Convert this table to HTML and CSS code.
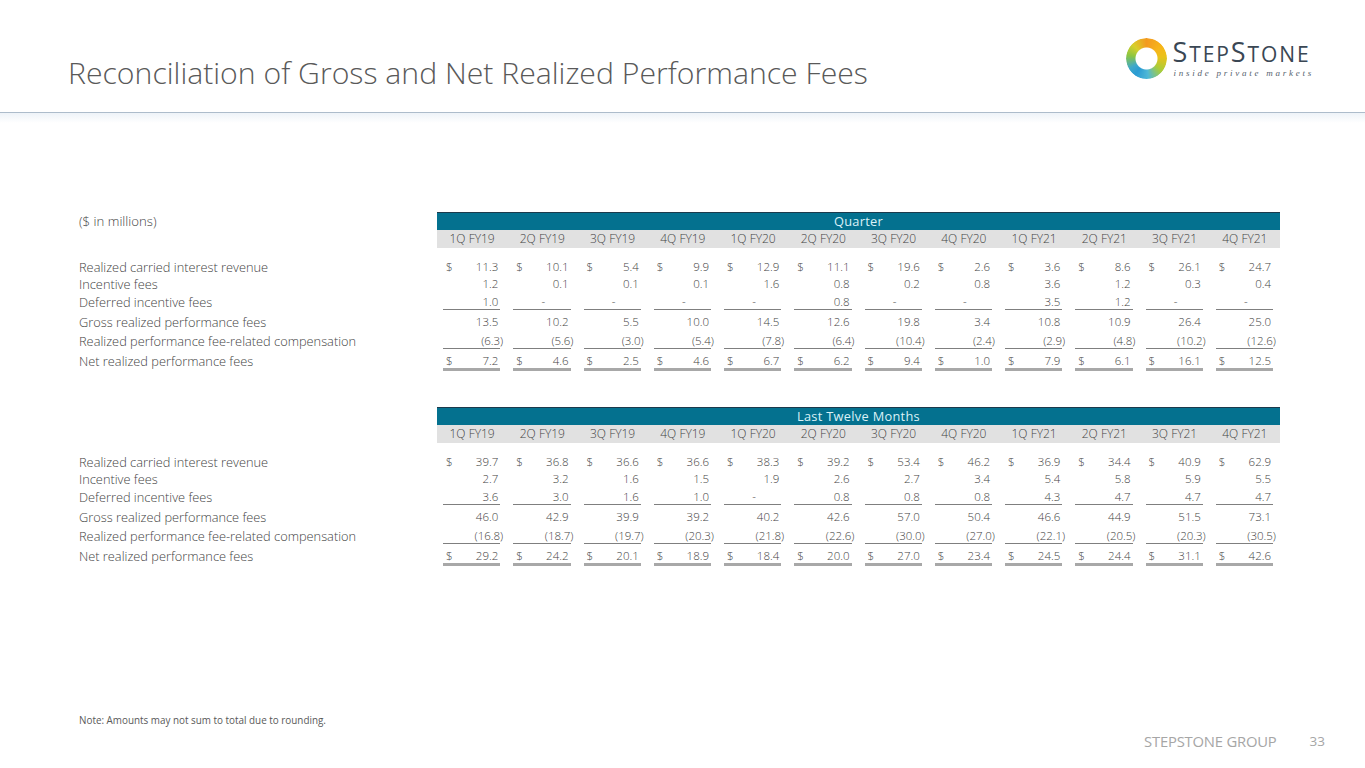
FILE: index.html
```html
<!DOCTYPE html>
<html lang="en">
<head>
<meta charset="utf-8">
<title>Reconciliation of Gross and Net Realized Performance Fees</title>
<link rel="stylesheet" href="styles.css">
</head>
<body>
<div class="page">
  <header class="top">
    <h1 class="title">Reconciliation of Gross and Net Realized Performance Fees</h1>
    <div class="logo">
      <div class="ring"></div>
      <div class="brand">
        <div class="word"><span class="big">S</span>TEP<span class="big">S</span>TONE</div>
        <div class="tag">inside private markets</div>
      </div>
    </div>
  </header>

  <main class="body">
    <section class="tbl">
      <div class="band"><div class="unit">($ in millions)</div><div class="bar">Quarter</div></div>
      <div class="grid hdr"><div></div><div class="hc">1Q FY19</div><div class="hc">2Q FY19</div><div class="hc">3Q FY19</div><div class="hc">4Q FY19</div><div class="hc">1Q FY20</div><div class="hc">2Q FY20</div><div class="hc">3Q FY20</div><div class="hc">4Q FY20</div><div class="hc">1Q FY21</div><div class="hc">2Q FY21</div><div class="hc">3Q FY21</div><div class="hc">4Q FY21</div></div>

      <div class="grid row r1"><div class="lab">Realized carried interest revenue</div>
        <div class="c"><span class="d">$</span><span class="v">11.3</span></div><div class="c"><span class="d">$</span><span class="v">10.1</span></div><div class="c"><span class="d">$</span><span class="v">5.4</span></div><div class="c"><span class="d">$</span><span class="v">9.9</span></div><div class="c"><span class="d">$</span><span class="v">12.9</span></div><div class="c"><span class="d">$</span><span class="v">11.1</span></div><div class="c"><span class="d">$</span><span class="v">19.6</span></div><div class="c"><span class="d">$</span><span class="v">2.6</span></div><div class="c"><span class="d">$</span><span class="v">3.6</span></div><div class="c"><span class="d">$</span><span class="v">8.6</span></div><div class="c"><span class="d">$</span><span class="v">26.1</span></div><div class="c"><span class="d">$</span><span class="v">24.7</span></div>
      </div>
      <div class="grid row r2"><div class="lab">Incentive fees</div>
        <div class="c"><span class="v">1.2</span></div><div class="c"><span class="v">0.1</span></div><div class="c"><span class="v">0.1</span></div><div class="c"><span class="v">0.1</span></div><div class="c"><span class="v">1.6</span></div><div class="c"><span class="v">0.8</span></div><div class="c"><span class="v">0.2</span></div><div class="c"><span class="v">0.8</span></div><div class="c"><span class="v">3.6</span></div><div class="c"><span class="v">1.2</span></div><div class="c"><span class="v">0.3</span></div><div class="c"><span class="v">0.4</span></div>
      </div>
      <div class="grid row r3 ul"><div class="lab">Deferred incentive fees</div>
        <div class="c"><span class="v">1.0</span></div><div class="c"><span class="v z">-</span></div><div class="c"><span class="v z">-</span></div><div class="c"><span class="v z">-</span></div><div class="c"><span class="v z">-</span></div><div class="c"><span class="v">0.8</span></div><div class="c"><span class="v z">-</span></div><div class="c"><span class="v z">-</span></div><div class="c"><span class="v">3.5</span></div><div class="c"><span class="v">1.2</span></div><div class="c"><span class="v z">-</span></div><div class="c"><span class="v z">-</span></div>
      </div>
      <div class="grid row r4"><div class="lab">Gross realized performance fees</div>
        <div class="c"><span class="v">13.5</span></div><div class="c"><span class="v">10.2</span></div><div class="c"><span class="v">5.5</span></div><div class="c"><span class="v">10.0</span></div><div class="c"><span class="v">14.5</span></div><div class="c"><span class="v">12.6</span></div><div class="c"><span class="v">19.8</span></div><div class="c"><span class="v">3.4</span></div><div class="c"><span class="v">10.8</span></div><div class="c"><span class="v">10.9</span></div><div class="c"><span class="v">26.4</span></div><div class="c"><span class="v">25.0</span></div>
      </div>
      <div class="grid row r5 ul"><div class="lab">Realized performance fee-related compensation</div>
        <div class="c"><span class="v n">(6.3)</span></div><div class="c"><span class="v n">(5.6)</span></div><div class="c"><span class="v n">(3.0)</span></div><div class="c"><span class="v n">(5.4)</span></div><div class="c"><span class="v n">(7.8)</span></div><div class="c"><span class="v n">(6.4)</span></div><div class="c"><span class="v n">(10.4)</span></div><div class="c"><span class="v n">(2.4)</span></div><div class="c"><span class="v n">(2.9)</span></div><div class="c"><span class="v n">(4.8)</span></div><div class="c"><span class="v n">(10.2)</span></div><div class="c"><span class="v n">(12.6)</span></div>
      </div>
      <div class="grid row r6 dl"><div class="lab">Net realized performance fees</div>
        <div class="c"><span class="d">$</span><span class="v">7.2</span></div><div class="c"><span class="d">$</span><span class="v">4.6</span></div><div class="c"><span class="d">$</span><span class="v">2.5</span></div><div class="c"><span class="d">$</span><span class="v">4.6</span></div><div class="c"><span class="d">$</span><span class="v">6.7</span></div><div class="c"><span class="d">$</span><span class="v">6.2</span></div><div class="c"><span class="d">$</span><span class="v">9.4</span></div><div class="c"><span class="d">$</span><span class="v">1.0</span></div><div class="c"><span class="d">$</span><span class="v">7.9</span></div><div class="c"><span class="d">$</span><span class="v">6.1</span></div><div class="c"><span class="d">$</span><span class="v">16.1</span></div><div class="c"><span class="d">$</span><span class="v">12.5</span></div>
      </div>
    </section>

    <section class="tbl tbl2">
      <div class="band"><div class="unit"></div><div class="bar">Last Twelve Months</div></div>
      <div class="grid hdr"><div></div><div class="hc">1Q FY19</div><div class="hc">2Q FY19</div><div class="hc">3Q FY19</div><div class="hc">4Q FY19</div><div class="hc">1Q FY20</div><div class="hc">2Q FY20</div><div class="hc">3Q FY20</div><div class="hc">4Q FY20</div><div class="hc">1Q FY21</div><div class="hc">2Q FY21</div><div class="hc">3Q FY21</div><div class="hc">4Q FY21</div></div>

      <div class="grid row r1"><div class="lab">Realized carried interest revenue</div>
        <div class="c"><span class="d">$</span><span class="v">39.7</span></div><div class="c"><span class="d">$</span><span class="v">36.8</span></div><div class="c"><span class="d">$</span><span class="v">36.6</span></div><div class="c"><span class="d">$</span><span class="v">36.6</span></div><div class="c"><span class="d">$</span><span class="v">38.3</span></div><div class="c"><span class="d">$</span><span class="v">39.2</span></div><div class="c"><span class="d">$</span><span class="v">53.4</span></div><div class="c"><span class="d">$</span><span class="v">46.2</span></div><div class="c"><span class="d">$</span><span class="v">36.9</span></div><div class="c"><span class="d">$</span><span class="v">34.4</span></div><div class="c"><span class="d">$</span><span class="v">40.9</span></div><div class="c"><span class="d">$</span><span class="v">62.9</span></div>
      </div>
      <div class="grid row r2"><div class="lab">Incentive fees</div>
        <div class="c"><span class="v">2.7</span></div><div class="c"><span class="v">3.2</span></div><div class="c"><span class="v">1.6</span></div><div class="c"><span class="v">1.5</span></div><div class="c"><span class="v">1.9</span></div><div class="c"><span class="v">2.6</span></div><div class="c"><span class="v">2.7</span></div><div class="c"><span class="v">3.4</span></div><div class="c"><span class="v">5.4</span></div><div class="c"><span class="v">5.8</span></div><div class="c"><span class="v">5.9</span></div><div class="c"><span class="v">5.5</span></div>
      </div>
      <div class="grid row r3 ul"><div class="lab">Deferred incentive fees</div>
        <div class="c"><span class="v">3.6</span></div><div class="c"><span class="v">3.0</span></div><div class="c"><span class="v">1.6</span></div><div class="c"><span class="v">1.0</span></div><div class="c"><span class="v z">-</span></div><div class="c"><span class="v">0.8</span></div><div class="c"><span class="v">0.8</span></div><div class="c"><span class="v">0.8</span></div><div class="c"><span class="v">4.3</span></div><div class="c"><span class="v">4.7</span></div><div class="c"><span class="v">4.7</span></div><div class="c"><span class="v">4.7</span></div>
      </div>
      <div class="grid row r4"><div class="lab">Gross realized performance fees</div>
        <div class="c"><span class="v">46.0</span></div><div class="c"><span class="v">42.9</span></div><div class="c"><span class="v">39.9</span></div><div class="c"><span class="v">39.2</span></div><div class="c"><span class="v">40.2</span></div><div class="c"><span class="v">42.6</span></div><div class="c"><span class="v">57.0</span></div><div class="c"><span class="v">50.4</span></div><div class="c"><span class="v">46.6</span></div><div class="c"><span class="v">44.9</span></div><div class="c"><span class="v">51.5</span></div><div class="c"><span class="v">73.1</span></div>
      </div>
      <div class="grid row r5 ul"><div class="lab">Realized performance fee-related compensation</div>
        <div class="c"><span class="v n">(16.8)</span></div><div class="c"><span class="v n">(18.7)</span></div><div class="c"><span class="v n">(19.7)</span></div><div class="c"><span class="v n">(20.3)</span></div><div class="c"><span class="v n">(21.8)</span></div><div class="c"><span class="v n">(22.6)</span></div><div class="c"><span class="v n">(30.0)</span></div><div class="c"><span class="v n">(27.0)</span></div><div class="c"><span class="v n">(22.1)</span></div><div class="c"><span class="v n">(20.5)</span></div><div class="c"><span class="v n">(20.3)</span></div><div class="c"><span class="v n">(30.5)</span></div>
      </div>
      <div class="grid row r6 dl"><div class="lab">Net realized performance fees</div>
        <div class="c"><span class="d">$</span><span class="v">29.2</span></div><div class="c"><span class="d">$</span><span class="v">24.2</span></div><div class="c"><span class="d">$</span><span class="v">20.1</span></div><div class="c"><span class="d">$</span><span class="v">18.9</span></div><div class="c"><span class="d">$</span><span class="v">18.4</span></div><div class="c"><span class="d">$</span><span class="v">20.0</span></div><div class="c"><span class="d">$</span><span class="v">27.0</span></div><div class="c"><span class="d">$</span><span class="v">23.4</span></div><div class="c"><span class="d">$</span><span class="v">24.5</span></div><div class="c"><span class="d">$</span><span class="v">24.4</span></div><div class="c"><span class="d">$</span><span class="v">31.1</span></div><div class="c"><span class="d">$</span><span class="v">42.6</span></div>
      </div>
    </section>
  </main>

  <p class="note">Note: Amounts may not sum to total due to rounding.</p>
  <footer class="foot">
    <span class="group">STEPSTONE GROUP</span>
    <span class="pg">33</span>
  </footer>
</div>
</body>
</html>
```

FILE: styles.css
```css
* { box-sizing: border-box; }
html, body { margin: 0; padding: 0; background: #fff; }
body { font-family: "Open Sans", "Liberation Sans", sans-serif; color: #5f5f5f; }

.page {
  width: 1365px;
  height: 768px;
  overflow: hidden;
  display: flex;
  flex-direction: column;
}

/* header */
.top {
  height: 113px;
  border-bottom: 1px solid #adbccb;
  display: flex;
  justify-content: space-between;
  align-items: flex-start;
  padding: 0 51px 0 68px;
  flex: none;
}
.title {
  margin: 53px 0 0 0;
  font-size: 30.2px;
  line-height: 40px;
  font-weight: 300;
  color: #595959;
}
.logo {
  margin-top: 38px;
  display: flex;
  align-items: flex-start;
  gap: 6px;
}
.ring {
  width: 41px;
  height: 41px;
  border-radius: 50%;
  background: conic-gradient(from 0deg,
    #f39a20 0deg, #f7b51a 50deg, #e9c21a 85deg, #a9cd3a 130deg,
    #4fb8d6 175deg, #2a9bd3 215deg, #3fa9c9 240deg, #8cc641 280deg,
    #d8cf2a 315deg, #f39a20 360deg);
  -webkit-mask: radial-gradient(circle at 50% 50%, transparent 10.5px, #000 11.5px);
  mask: radial-gradient(circle at 50% 50%, transparent 10.5px, #000 11.5px);
}
.brand { display: flex; flex-direction: column; padding-top: 0; }
.word {
  font-family: "Open Sans", "Liberation Sans", sans-serif;
  font-size: 21px;
  line-height: 28px;
  color: #3a4754;
  letter-spacing: 1.9px;
  font-weight: 400;
  white-space: nowrap;
}
.word .big { font-size: 27px; }
.tag {
  font-family: "Liberation Serif", serif;
  font-style: italic;
  font-size: 9px;
  line-height: 10px;
  letter-spacing: 2.75px;
  color: #56636e;
  margin-top: 0;
  padding-left: 1px;
  white-space: nowrap;
}

/* body */
.body {
  flex: 1;
  padding: 99px 0 0 79px;
  background: linear-gradient(#eef3f8, #ffffff 10px) no-repeat;
}
.tbl2 { margin-top: 36px; }

.band {
  display: grid;
  grid-template-columns: 358px 843px;
  height: 18px;
}
.unit {
  font-size: 13.2px;
  line-height: 18px;
  font-weight: 300;
  color: #444;
}
.bar {
  background: #04718f;
  border-top: 1px solid #1c3a4c;
  color: #dbf1f7;
  font-size: 12.8px;
  line-height: 16px;
  text-align: center;
  letter-spacing: 0.3px;
}

.grid {
  display: grid;
  grid-template-columns: 358px repeat(12, 70.25px);
}
.hdr { height: 18px; }
.hc {
  background: #e1e1e1;
  text-align: center;
  font-size: 12px;
  line-height: 18px;
  font-weight: 300;
  color: #444;
}

.row { font-size: 12.8px; line-height: 14px; font-weight: 300; }
.r1 { margin-top: 12px; }
.r2 { margin-top: 3px; }
.r3 { margin-top: 4px; }
.r4, .r5, .r6 { margin-top: 5px; }

.lab { white-space: nowrap; color: #444; }
.c {
  display: flex;
  justify-content: space-between;
  margin: 0 7px 0 6px;
  padding: 0 0 0 3px;
  color: #444;
  font-size: 11.5px;
  white-space: nowrap;
}
.ul .c { border-bottom: 1px solid #7f7f7f; }
.dl .c { border-bottom: 3px solid #a8a8a8; }
.v { margin-left: auto; padding-right: 2px; }
.v.n { padding-right: 0; margin-right: -3px; }
.v.z { margin: 0 auto; padding: 0; }

/* footer */
.note {
  margin: 0;
  padding-left: 79px;
  font-size: 9.9px;
  line-height: 12px;
  color: #595959;
  flex: none;
}
.foot {
  flex: none;
  height: 42px;
  display: flex;
  justify-content: flex-end;
  align-items: flex-start;
  padding: 5px 40px 0 0;
  gap: 33px;
}
.group {
  font-size: 14.8px;
  line-height: 20px;
  color: #a6a6a6;
  letter-spacing: -0.2px;
}
.pg {
  font-size: 13.5px;
  line-height: 20px;
  color: #a6a6a6;
}
```
